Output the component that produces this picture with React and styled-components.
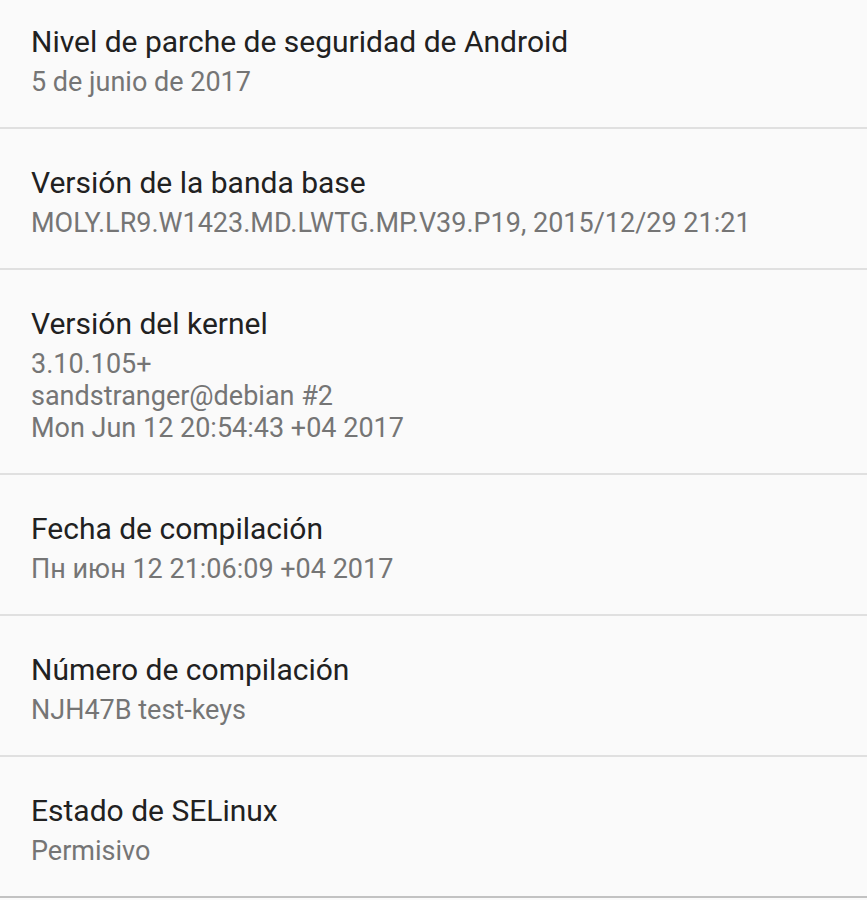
import React from "react";
import styled, { createGlobalStyle } from "styled-components";

const Global = createGlobalStyle`
  html, body { margin: 0; padding: 0; background: #fafafa; }
  body { font-family: Roboto, "Noto Sans", sans-serif; -webkit-font-smoothing: antialiased; }
`;

const List = styled.div`
  width: 867px;
  height: 900px;
  overflow: hidden;
  background: #fafafa;
  display: flex;
  flex-direction: column;
`;

const Row = styled.div`
  padding: ${(p) => (p.$first ? "22px" : "34px")} 31px 29px 31px;
  border-bottom: 2px solid ${(p) => (p.$last ? "#c2c2c2" : "#e0e0e0")};
  display: flex;
  flex-direction: column;
  flex-shrink: 0;
`;

const Title = styled.div`
  font-size: 30px;
  line-height: 40px;
  color: #212121;
  white-space: nowrap;
`;

const Summary = styled.div`
  margin-top: 4px;
  font-size: 27px;
  line-height: 32px;
  color: #757575;
  white-space: pre-line;
`;

const items = [
  { t: "Nivel de parche de seguridad de Android", s: "5 de junio de 2017" },
  { t: "Versión de la banda base", s: "MOLY.LR9.W1423.MD.LWTG.MP.V39.P19, 2015/12/29 21:21" },
  { t: "Versión del kernel", s: "3.10.105+\nsandstranger@debian #2\nMon Jun 12 20:54:43 +04 2017" },
  { t: "Fecha de compilación", s: "Пн июн 12 21:06:09 +04 2017" },
  { t: "Número de compilación", s: "NJH47B test-keys" },
  { t: "Estado de SELinux", s: "Permisivo" },
];

export default function App() {
  return (
    <>
      <Global />
      <List>
        {items.map((it, i) => (
          <Row key={i} $first={i === 0} $last={i === items.length - 1}>
            <Title>{it.t}</Title>
            <Summary>{it.s}</Summary>
          </Row>
        ))}
      </List>
    </>
  );
}
